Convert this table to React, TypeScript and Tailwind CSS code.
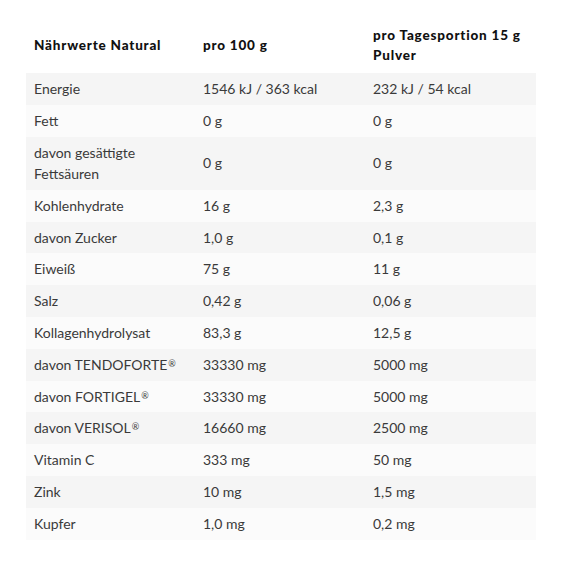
import { Fragment } from "react"

const rows: [string, string, string][] = [
  ["Energie", "1546 kJ / 363 kcal", "232 kJ / 54 kcal"],
  ["Fett", "0 g", "0 g"],
  ["davon gesättigte Fettsäuren", "0 g", "0 g"],
  ["Kohlenhydrate", "16 g", "2,3 g"],
  ["davon Zucker", "1,0 g", "0,1 g"],
  ["Eiweiß", "75 g", "11 g"],
  ["Salz", "0,42 g", "0,06 g"],
  ["Kollagenhydrolysat", "83,3 g", "12,5 g"],
  ["davon TENDOFORTE®", "33330 mg", "5000 mg"],
  ["davon FORTIGEL®", "33330 mg", "5000 mg"],
  ["davon VERISOL®", "16660 mg", "2500 mg"],
  ["Vitamin C", "333 mg", "50 mg"],
  ["Zink", "10 mg", "1,5 mg"],
  ["Kupfer", "1,0 mg", "0,2 mg"],
]

// ® sits small and raised in the original
function Label({ text }: { text: string }) {
  const parts = text.split("®")
  return (
    <>
      {parts.map((p, i) => (
        <Fragment key={i}>
          {p}
          {i < parts.length - 1 && (
            <span className="relative -top-[3px] ml-[1px] text-[9px] leading-[0]">®</span>
          )}
        </Fragment>
      ))}
    </>
  )
}

export default function App() {
  return (
    <div className="min-h-[570px] w-[570px] bg-white pt-[17px] pl-[26px] font-['Lato','Liberation_Sans',sans-serif]">
      <table className="w-[510px] table-fixed border-collapse">
        <thead>
          <tr>
            <th className="w-[169px] px-2 py-2 text-left align-middle text-[13.5px] leading-[20px] font-black tracking-[0.8px] text-[#111]">
              Nährwerte Natural
            </th>
            <th className="w-[170px] px-2 py-2 text-left align-middle text-[13.5px] leading-[20px] font-black tracking-[0.8px] text-[#111]">
              pro 100 g
            </th>
            <th className="px-2 py-2 text-left align-middle text-[13.5px] leading-[20px] font-black tracking-[0.8px] text-[#111]">
              pro Tagesportion 15 g Pulver
            </th>
          </tr>
        </thead>
        <tbody>
          {rows.map((r, i) => (
            <tr key={r[0]} className={i % 2 === 0 ? "bg-[#f5f5f5]" : "bg-[#fbfbfb]"}>
              {r.map((c, j) => (
                <td
                  key={j}
                  className="h-[31.8px] px-2 py-[5px] align-middle text-[14px] leading-[21.6px] text-[#3a3a3a]"
                >
                  <Label text={c} />
                </td>
              ))}
            </tr>
          ))}
        </tbody>
      </table>
    </div>
  )
}
